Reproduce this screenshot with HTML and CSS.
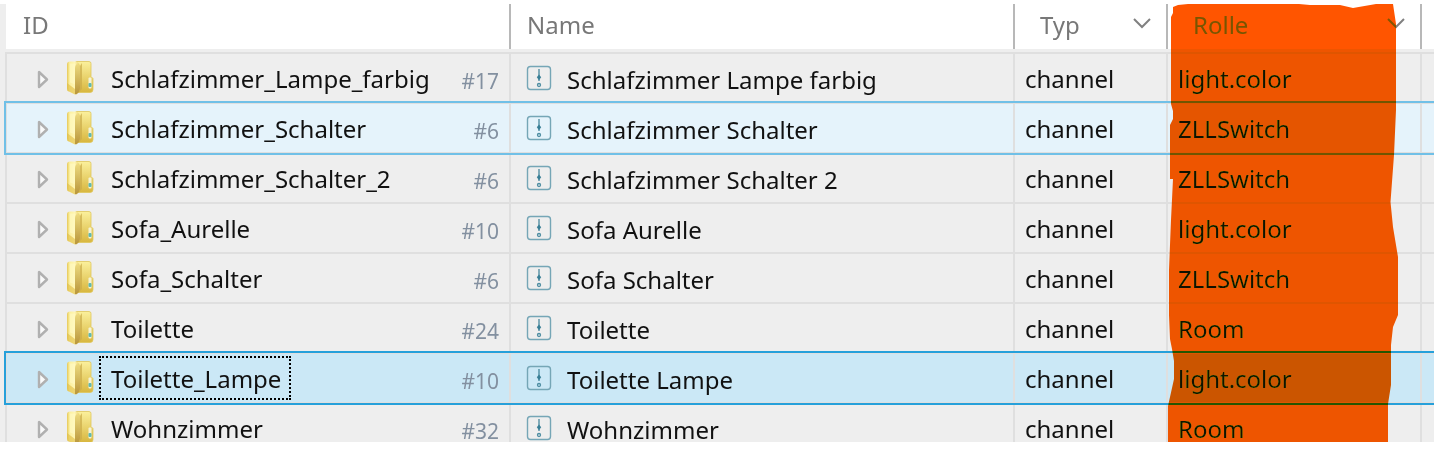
FILE: index.html
```html
<!DOCTYPE html>
<html lang="de">
<head>
    <meta charset="UTF-8">
    <title>Objekte</title>
    <link rel="stylesheet" href="styles.css">
</head>
<body>
<!-- Icons -->
<svg class="sprite" aria-hidden="true">
    <defs>
        <linearGradient id="cover" x1="0" x2="1">
            <stop offset="0" stop-color="#e6c857"/>
            <stop offset="0.2" stop-color="#fbef9e"/>
            <stop offset="0.6" stop-color="#fff6b4"/>
            <stop offset="1" stop-color="#e3c860"/>
        </linearGradient>
        <linearGradient id="spine" x1="0" y1="0" x2="0" y2="1">
            <stop offset="0" stop-color="#ecd97e"/>
            <stop offset="1" stop-color="#b8953a"/>
        </linearGradient>
        <linearGradient id="back" x1="0" y1="0" x2="0" y2="1">
            <stop offset="0" stop-color="#fbf09c"/>
            <stop offset="1" stop-color="#d8b63e"/>
        </linearGradient>
        <symbol id="folder" viewBox="0 0 28 34">
            <path d="M10 0.500h13q2 0 2 2v13l2 2v11q0 3-3 3H11z" fill="url(#back)" stroke="#e0c65c" stroke-width="0.800"/>
            <path d="M16 2v26l-4 4V8z" fill="#cbab48" opacity="0.700"/>
            <path d="M1 3.500Q1 0.500 4 0.500h6.500q3.500 2 3.500 6v21q0 3-3 5.500l-2 0.500-6-3q-2-0.500-2-3z" fill="url(#cover)"/>
            <path d="M9 7q0-3 2-4 3 1 3 5v19q0 4-4 6.500l-1-0.500z" fill="url(#spine)"/>
            <path d="M4 2.500h5q1 1 0 3v18l-5-2z" fill="#fffac6" opacity="0.600"/>
            <path d="M1 22v6q0 2 2 2.500l6 3V28z" fill="#dfbc42" opacity="0.600"/>
            <rect x="22.500" y="16.500" width="3" height="11" rx="1" fill="#f4f3d8"/>
            <rect x="22.500" y="22" width="3" height="4" rx="1" fill="#5fb9b0"/>
        </symbol>
        <symbol id="arrow" viewBox="0 0 12 20">
            <path d="M2 2v15l8-7.500z" fill="#fafafa" stroke="#b0b0b0" stroke-width="2.400" stroke-linejoin="round"/>
        </symbol>
        <symbol id="channel" viewBox="0 0 26 26">
            <rect x="1.500" y="1.500" width="23" height="23" rx="3" fill="none" stroke="#75a6b6" stroke-width="1.400"/>
            <path d="M13 4v12" stroke="#397f96" stroke-width="1.200"/>
            <path d="M13 9.500l2.200 2.700-2.200 3-2.200-3z" fill="#397f96"/>
            <circle cx="13" cy="20" r="1.500" fill="none" stroke="#4d8da2" stroke-width="1.300"/>
        </symbol>
        <symbol id="chevron" viewBox="0 0 18 11">
            <path d="M1 1l8 8 8-8" fill="none" stroke="#808080" stroke-width="2"/>
        </symbol>
    </defs>
</svg>

<div class="panel">
    <table id="objectTable">
        <colgroup>
            <col>
            <col>
            <col class="col-type">
            <col class="col-role">
            <col class="col-rest">
        </colgroup>
        <thead>
        <tr>
            <th><div class="head"><input type="text" placeholder="ID" aria-label="ID"></div></th>
            <th><div class="head"><input type="text" placeholder="Name" aria-label="Name"></div></th>
            <th>
                <div class="head">
                    <select aria-label="Typ"><option>Typ</option></select>
                    <svg class="chevron"><use href="#chevron"/></svg>
                </div>
            </th>
            <th class="marked">
                <div class="head">
                    <select aria-label="Rolle"><option>Rolle</option></select>
                    <svg class="chevron"><use href="#chevron"/></svg>
                </div>
                <!-- Markierung der Spalte Rolle -->
                <svg class="marker" viewBox="0 0 235 438" aria-hidden="true">
                    <path d="M6 3L11 1 21 0H132L143 1H173L186 4 209 0H226L229 20V106L227 151 223.500 198 226 223 231 253V311L226 323 224 341V381L221 400V438H1V402L5 384 7 375V357L5 345 3 335 2 311V266L4 216 6 175H3V121L6 115V107L4 100V13L6 9z"/>
                </svg>
            </th>
            <th><div class="head"></div></th>
        </tr>
        </thead>
        <tbody></tbody>
    </table>
</div>

<script>
    const objects = [
        {id: "Schlafzimmer_Lampe_farbig", count: 17, name: "Schlafzimmer Lampe farbig", role: "light.color"},
        {id: "Schlafzimmer_Schalter", count: 6, name: "Schlafzimmer Schalter", role: "ZLLSwitch", state: "hovered"},
        {id: "Schlafzimmer_Schalter_2", count: 6, name: "Schlafzimmer Schalter 2", role: "ZLLSwitch"},
        {id: "Sofa_Aurelle", count: 10, name: "Sofa Aurelle", role: "light.color"},
        {id: "Sofa_Schalter", count: 6, name: "Sofa Schalter", role: "ZLLSwitch"},
        {id: "Toilette", count: 24, name: "Toilette", role: "Room"},
        {id: "Toilette_Lampe", count: 10, name: "Toilette Lampe", role: "light.color", state: "active"},
        {id: "Wohnzimmer", count: 32, name: "Wohnzimmer", role: "Room"}
    ];

    function displayObjects() {
        const tableBody = document.querySelector("#objectTable tbody");

        objects.forEach((object) => {
            const row = document.createElement("tr");
            row.className = object.state || "";

            row.innerHTML = `
          <td>
            <div class="cell cell-id">
              <button class="expander" aria-label="Aufklappen"><svg><use href="#arrow"/></svg></button>
              <svg class="folder"><use href="#folder"/></svg>
              <span class="title">${object.id}</span>
              <span class="count">#${object.count}</span>
            </div>
          </td>
          <td>
            <div class="cell cell-name">
              <svg class="channel"><use href="#channel"/></svg>
              <span class="name">${object.name}</span>
            </div>
          </td>
          <td><div class="cell">channel</div></td>
          <td><div class="cell">${object.role}</div></td>
          <td></td>
        `;

            tableBody.appendChild(row);
        });
    }

    displayObjects();
</script>
</body>
</html>
```
FILE: styles.css
```css
* {
    box-sizing: border-box;
}

body {
    margin: 0;
    background-color: white;
    font-family: "Noto Sans", "Open Sans", sans-serif;
    font-size: 24px;
    color: #111;
}

.sprite {
    position: absolute;
    width: 0;
    height: 0;
}

.panel {
    height: calc(100vh - 34px);
    margin-top: 4px;
    padding-left: 5px;
    overflow: hidden;
    background-color: #eee;
}

table {
    width: calc(100% + 6px);
    table-layout: fixed;
    border-collapse: collapse;
}

.col-type {
    width: 153px;
}

.col-role {
    width: 254px;
}

.col-rest {
    width: 18px;
}

/* Kopfzeile mit Filtern */
th {
    height: 49px;
    padding: 0;
    vertical-align: top;
    font-weight: normal;
}

.head {
    display: flex;
    align-items: center;
    height: 45px;
    padding: 0 18px 0 16px;
    border: solid #b8b8b8;
    border-width: 0 1px;
    background-color: white;
}

th:first-child .head {
    border-left-color: white;
}

.head input,
.head select {
    flex: 1;
    min-width: 0;
    height: 40px;
    padding: 0 0 4px;
    border: none;
    outline: none;
    appearance: none;
    background: none;
    font: inherit;
    color: #787878;
}

.head input::placeholder {
    color: #787878;
}

.head select {
    padding-left: 9px;
}

.chevron {
    width: 18px;
    height: 11px;
    margin: 0 -3px 6px 0;
    pointer-events: none;
}

.marked {
    position: relative;
}

.marker {
    position: absolute;
    top: 0;
    left: 0;
    width: 235px;
    height: 438px;
    fill: #ff5500;
    mix-blend-mode: darken;
    pointer-events: none;
}

/* Zeilen */
td {
    height: 50px;
    padding: 0;
    border: 2px solid #dfdfdf;
}

.cell {
    display: flex;
    align-items: center;
    height: 48px;
    padding-left: 10px;
    white-space: nowrap;
}

.cell-id {
    padding: 0 10px 0 30px;
}

.expander {
    width: 12px;
    height: 20px;
    margin: 4px 17px 0 0;
    padding: 0;
    border: none;
    background: none;
}

.expander svg {
    display: block;
    width: 12px;
    height: 20px;
}

.folder {
    width: 28px;
    height: 34px;
}

.title {
    height: 44px;
    margin-left: 5px;
    padding: 0 8px 0 10px;
    border: 2px solid transparent;
    line-height: 42px;
}

.count {
    margin-left: auto;
    padding-top: 6px;
    font-size: 21px;
    color: #8390a0;
}

.cell-name {
    gap: 15px;
    padding-left: 15px;
}

.name {
    padding-top: 2px;
}

.channel {
    width: 26px;
    height: 26px;
}

.hovered {
    background-color: #e5f3fb;
    outline: 2px solid #70c0e7;
}

.active {
    background-color: #cbe8f6;
    outline: 2px solid #26a0da;
}

.active .title {
    border: 2px dotted black;
}
```
